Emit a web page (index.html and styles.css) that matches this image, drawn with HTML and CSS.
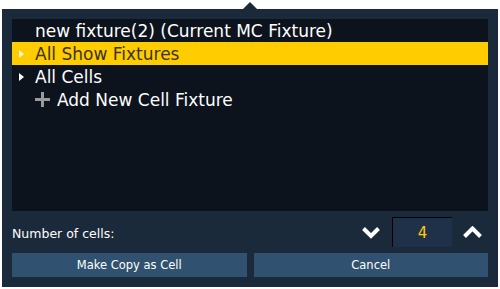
FILE: index.html
```html
<!DOCTYPE html>
<html>
<head>
<meta charset="utf-8">
<link rel="stylesheet" href="styles.css">
</head>
<body>
<div class="dialog">
  <div class="notch"></div>
  <div class="list">
    <div class="row"><span class="exp"></span><span class="label">new fixture(2) (Current MC Fixture)</span></div>
    <div class="row selected"><span class="exp"><span class="tri"></span></span><span class="label">All Show Fixtures</span></div>
    <div class="row"><span class="exp"><span class="tri"></span></span><span class="label">All Cells</span></div>
    <div class="row"><span class="exp"></span><span class="plus"><svg width="15" height="15" viewBox="0 0 15 15"><rect x="6" y="0" width="3" height="15" fill="#9a9a9a"/><rect x="0" y="6" width="15" height="3" fill="#9a9a9a"/></svg></span><span class="label">Add New Cell Fixture</span></div>
  </div>
  <div class="count">
    <span class="count-label">Number of cells:</span>
    <div class="stepper">
      <svg class="chev" width="20" height="13" viewBox="0 0 20 13"><polyline points="2.5,2.5 10,10 17.5,2.5" fill="none" stroke="#fff" stroke-width="4"/></svg>
      <div class="value">4</div>
      <svg class="chev" width="21" height="13" viewBox="0 0 21 13"><polyline points="2.5,10.5 10.5,2.5 18.5,10.5" fill="none" stroke="#fff" stroke-width="4"/></svg>
    </div>
  </div>
  <div class="buttons">
    <div class="btn">Make Copy as Cell</div>
    <div class="btn">Cancel</div>
  </div>
</div>
</body>
</html>
```
FILE: styles.css
```css
html, body {
  margin: 0;
  padding: 0;
  background: #ffffff;
}
body {
  font-family: "DejaVu Sans", sans-serif;
}
.dialog {
  position: relative;
  margin: 9px 0 0 2px;
  width: 496px;
  height: 278px;
  box-sizing: border-box;
  padding: 10px 10px 0 10px;
  background: #1b2a3b;
  display: flex;
  flex-direction: column;
}
.notch {
  position: absolute;
  top: -7px;
  left: 241px;
  width: 0;
  height: 0;
  border-left: 7px solid transparent;
  border-right: 7px solid transparent;
  border-bottom: 7px solid #1b2a3b;
}
.list {
  height: 192px;
  background: #0c131d;
}
.row {
  height: 23px;
  display: flex;
  align-items: center;
  color: #ffffff;
  font-size: 17px;
}
.row.selected {
  background: #ffcc00;
  color: #3a3320;
}
.exp {
  width: 23px;
  display: flex;
  align-items: center;
  padding-left: 7px;
  box-sizing: border-box;
}
.tri {
  width: 0;
  height: 0;
  border-top: 4px solid transparent;
  border-bottom: 4px solid transparent;
  border-left: 5px solid #ffffff;
}
.selected .tri {
  border-left-color: #fff6d0;
}
.plus {
  display: flex;
  margin-right: 7px;
}
.label {
  white-space: nowrap;
}
.count {
  display: flex;
  align-items: center;
  justify-content: space-between;
  margin-top: 6px;
  height: 30px;
}
.count-label {
  color: #ffffff;
  font-size: 12.5px;
  padding-top: 2px;
}
.stepper {
  display: flex;
  align-items: center;
  margin-right: 5px;
}
.chev {
  display: block;
}
.value {
  width: 60px;
  height: 30px;
  box-sizing: border-box;
  margin: 0 10px 0 11px;
  background: #1f3149;
  border-top: 1px solid #000000;
  border-left: 1px solid #000000;
  color: #ffcc00;
  font-size: 15px;
  display: flex;
  align-items: center;
  justify-content: center;
}
.buttons {
  display: flex;
  gap: 7px;
  margin-top: 6px;
}
.btn {
  flex: 1;
  height: 24px;
  background: #30516f;
  color: #ffffff;
  font-size: 11.5px;
  display: flex;
  align-items: center;
  justify-content: center;
}
```
